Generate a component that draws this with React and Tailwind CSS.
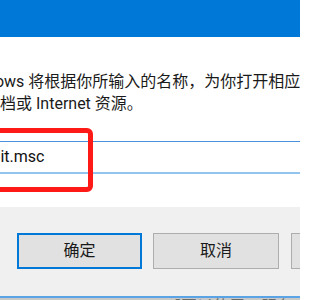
export default function App() {
  const font = { fontFamily: 'Roboto, "Noto Sans CJK SC", sans-serif' };

  return (
    <div className="relative flex h-[300px] w-[300px] flex-col overflow-hidden bg-white" style={font}>
      {/* title bar */}
      <div className="h-[37px] shrink-0 bg-[#0078d7]" />

      {/* body */}
      <div className="flex h-[170px] shrink-0 flex-col bg-white pt-[34px]">
        <p className="whitespace-nowrap text-[16px] leading-[22px] text-[#1a1a1a]">
          <span className="-ml-[41px] block">Windows 将根据你所输入的名称，为你打开相应的程序、文件夹、文</span>
          <span className="block">档或 Internet 资源。</span>
        </p>
        <div className="-ml-[43px] mt-[26px] flex h-[33px] w-[400px] items-center border-t border-b-2 border-t-[#4b92dc] border-b-[#93c3ef] bg-white pl-[8px] text-[16px] text-[#111]">
          gpedit.msc
        </div>
      </div>

      {/* red highlight */}
      <div className="absolute left-[-12px] top-[128px] h-[64px] w-[105px] rounded-[6px] border-[5px] border-[#ff1a17]" />

      {/* footer */}
      <div className="flex h-[89px] shrink-0 gap-[11px] bg-[#f0f0f0] pl-[17px] pt-[26px]">
        <button className="flex h-[36px] w-[125px] shrink-0 items-center justify-center border-2 border-[#0078d7] bg-[#e1e1e1] text-[16px] text-[#1a1a1a]">
          确定
        </button>
        <button className="flex h-[36px] w-[126px] shrink-0 items-center justify-center border border-[#adadad] bg-[#e1e1e1] text-[16px] text-[#1a1a1a]">
          取消
        </button>
        <button className="ml-px flex h-[36px] w-[126px] shrink-0 items-center justify-center border border-[#adadad] bg-[#e1e1e1] text-[16px] text-[#1a1a1a]">
          浏览
        </button>
      </div>

      <div className="h-[2px] shrink-0 bg-[#5aa3e4]" />
      <div className="h-[4px] shrink-0 overflow-hidden bg-[#c9c9c9]">
        <div className="whitespace-nowrap pl-[165px] pt-[1px] text-[16px] leading-[16px] text-[#6b6b6b]">【图以使用Ⅲ服务 ④ 】</div>
      </div>
    </div>
  );
}
